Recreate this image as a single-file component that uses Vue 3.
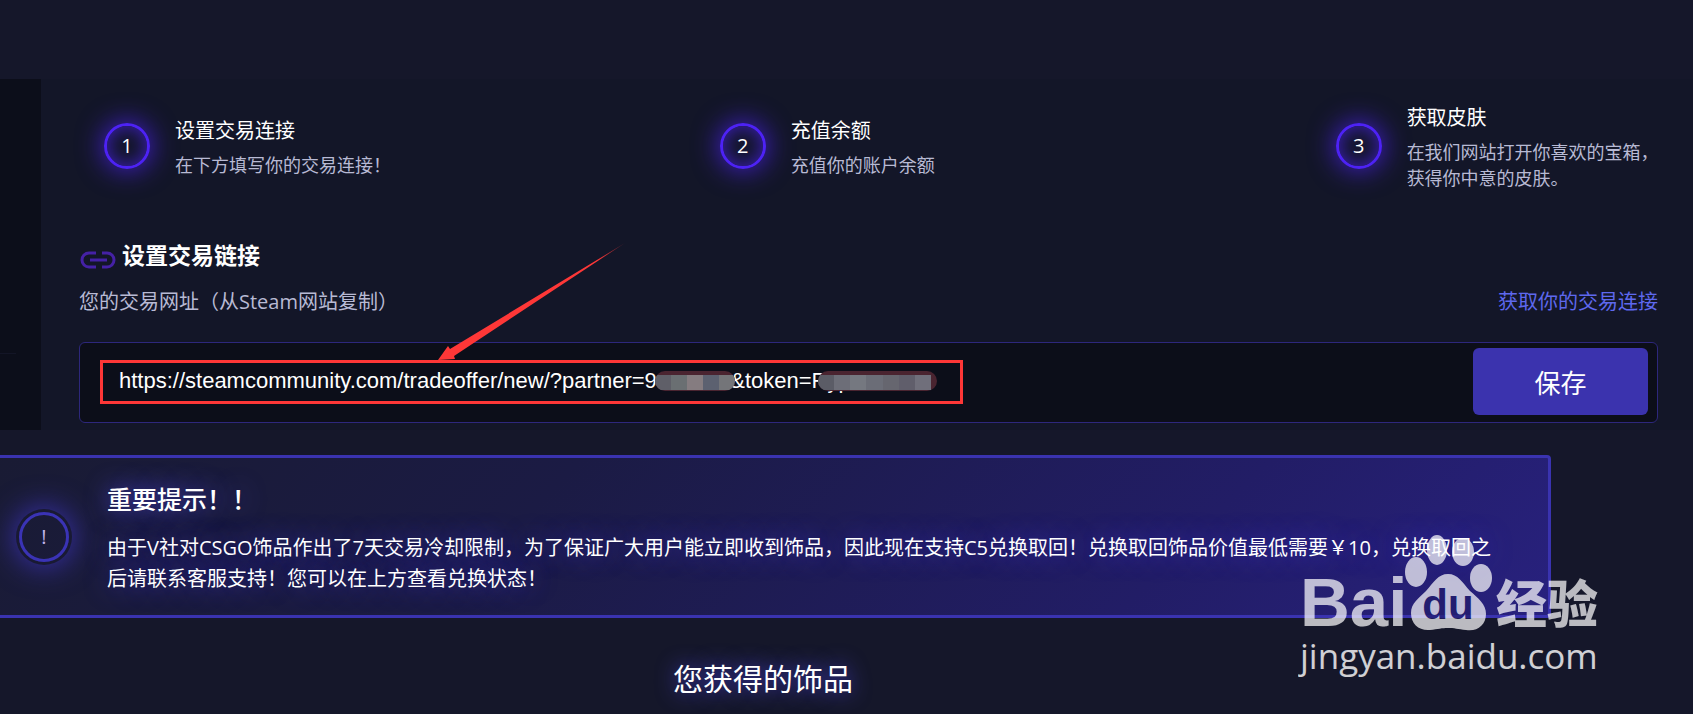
<template>
    <div class="page">
        <div class="panel">
            <aside class="sidebar">
                <div class="sidebar-divider"></div>
            </aside>

            <main class="content">
                <ol class="steps">
                    <li v-for="(step, index) in steps" :key="step.title" class="step">
                        <span class="step-number">{{ index + 1 }}</span>
                        <div class="step-body">
                            <h3>{{ step.title }}</h3>
                            <p>{{ step.text }}</p>
                        </div>
                    </li>
                </ol>

                <h2 class="section-title">
                    <svg class="link-icon" viewBox="0 0 36 18" fill="none" stroke="currentColor" stroke-width="3">
                        <path d="M16 2H9a7 7 0 0 0 0 14h7M22 2h5a7 7 0 0 1 0 14h-5" />
                        <path d="M10 9h17" />
                    </svg>
                    设置交易链接
                </h2>

                <div class="label-row">
                    <label for="trade-url">您的交易网址（从Steam网站复制）</label>
                    <a href="#">获取你的交易连接</a>
                </div>

                <form class="url-form" @submit.prevent="save">
                    <input id="trade-url" v-model="tradeUrl" type="text" spellcheck="false" />
                    <button type="submit">保存</button>

                    <!-- Annotations over the field -->
                    <div class="highlight"></div>
                    <div class="mosaic partner">
                        <i v-for="(color, index) in partnerBlocks" :key="index" :style="{ background: color }"></i>
                    </div>
                    <div class="mosaic token">
                        <i v-for="(color, index) in tokenBlocks" :key="index" :style="{ background: color }"></i>
                    </div>
                    <svg class="arrow" viewBox="0 0 188 118">
                        <defs>
                            <linearGradient id="arrow-fill" x1="0" y1="1" x2="1" y2="0">
                                <stop offset="0.85" stop-color="#fe3737" />
                                <stop offset="1" stop-color="#fe3737" stop-opacity="0.3" />
                            </linearGradient>
                        </defs>
                        <path d="M0 117L10 103L12 106L187 0L16 113L17 116Z" fill="url(#arrow-fill)" />
                    </svg>
                </form>
            </main>
        </div>

        <section class="lower">
            <div class="notice">
                <span class="notice-icon">!</span>
                <div class="notice-body">
                    <h3>重要提示！！</h3>
                    <p>{{ notice }}</p>
                </div>
            </div>
            <h2 class="items-title">您获得的饰品</h2>
        </section>

        <div class="watermark">
            <div class="brand">
                <span class="brand-latin">Bai</span>
                <svg class="paw" viewBox="0 0 88 96">
                    <ellipse cx="12" cy="37" rx="11" ry="15" />
                    <ellipse cx="33" cy="15" rx="10" ry="15" />
                    <ellipse cx="59" cy="17" rx="11" ry="14" />
                    <ellipse cx="77" cy="43" rx="11" ry="14" />
                    <path
                        d="M44 39C54 39 58 47 66 56C74 63 82 69 82 79C82 90 73 97 62 95C54 94 50 93 44 93C38 93 34 94 26 95C15 96 7 89 7 78C7 68 15 63 22 56C30 47 34 39 44 39Z" />
                    <text x="44" y="84" text-anchor="middle">du</text>
                </svg>
                <span class="brand-cjk">经验</span>
            </div>
            <div class="domain">jingyan.baidu.com</div>
        </div>
    </div>
</template>

<script setup>
import { ref } from "vue";

const steps = [
    { title: "设置交易连接", text: "在下方填写你的交易连接！" },
    { title: "充值余额", text: "充值你的账户余额" },
    { title: "获取皮肤", text: "在我们网站打开你喜欢的宝箱，\n获得你中意的皮肤。" },
];

const notice =
    "由于V社对CSGO饰品作出了7天交易冷却限制，为了保证广大用户能立即收到饰品，因此现在支持C5兑换取回！兑换取回饰品价值最低需要￥10，兑换取回之后请联系客服支持！您可以在上方查看兑换状态！";

const tradeUrl = ref("https://steamcommunity.com/tradeoffer/new/?partner=9999999&token=Ryp");

const partnerBlocks = ["#5f5f68", "#6a6f72", "#857c80", "#5c6170", "#747579"];
const tokenBlocks = ["#5b5c66", "#6d6e78", "#757880", "#6b6d77", "#66666f", "#605e6b", "#706f7b"];

const save = () => {
    tradeUrl.value = tradeUrl.value.trim();
};
</script>

<style>
body {
    background: #15172a;
}
</style>

<style scoped>
.page {
    position: relative;
    box-sizing: border-box;
    min-height: 100vh;
    padding-top: 79px;
    overflow: hidden;
    background: #15172a;
    color: #fff;
    font-family: "Open Sans", "Noto Sans CJK SC", sans-serif;
}

h2,
h3,
p,
ol {
    margin: 0;
    padding: 0;
    font-weight: 400;
}

/* --- Panel --- */
.panel {
    display: flex;
    background: #131628;
}

.sidebar {
    flex: 0 0 41px;
    background: #0c0e1a;
}

.sidebar-divider {
    width: 16px;
    height: 274px;
    border-bottom: 1px solid #131526;
}

.content {
    flex: 1;
    min-width: 0;
    padding: 22px 35px 7px 38px;
}

/* --- Steps --- */
.steps {
    display: flex;
    justify-content: space-between;
    list-style: none;
}

.step {
    box-sizing: border-box;
    display: flex;
    align-items: center;
    gap: 25px;
    width: 22%;
    padding-left: 25px;
}

.step-number {
    box-sizing: border-box;
    flex: 0 0 46px;
    height: 46px;
    border: 3px solid #4d22f5;
    border-radius: 50%;
    box-shadow: 0 0 26px 2px rgba(77, 34, 245, 0.75), inset 0 0 18px rgba(77, 34, 245, 0.7);
    font-size: 20px;
    line-height: 40px;
    text-align: center;
}

.step-body {
    white-space: pre;
}

.step-body h3 {
    margin-bottom: 4px;
    font-size: 20px;
    line-height: 34px;
}

.step-body p {
    color: #b8bad4;
    font-size: 18px;
    line-height: 26px;
}

/* --- Trade link form --- */
.section-title {
    display: flex;
    align-items: center;
    gap: 6px;
    margin-top: 48px;
    font-size: 23px;
    font-weight: 700;
    line-height: 32px;
}

.link-icon {
    width: 36px;
    height: 18px;
    margin: 10px 0 0 1px;
    color: #4521a6;
}

.label-row {
    display: flex;
    justify-content: space-between;
    margin: 17px 0 26px;
    color: #b8bad4;
    font-size: 20px;
    line-height: 28px;
}

.label-row a {
    color: #5e68ee;
    text-decoration: none;
}

.url-form {
    position: relative;
    display: flex;
    padding: 5px 9px 7px 0;
    border: 1px solid #2d277c;
    border-radius: 6px;
    background: #0c0e19;
}

.url-form input {
    flex: 1;
    min-width: 0;
    padding: 0 39px 1px;
    border: none;
    outline: none;
    background: transparent;
    color: #fff;
    font-family: "Liberation Sans", Arial, sans-serif;
    font-size: 22px;
}

.url-form button {
    width: 175px;
    height: 67px;
    border: none;
    border-radius: 6px;
    background: #3b33ae;
    color: #fff;
    cursor: pointer;
    font-family: inherit;
    font-size: 26px;
}

/* --- Annotations --- */
.highlight {
    position: absolute;
    top: 17px;
    left: 20px;
    box-sizing: border-box;
    width: 863px;
    height: 44px;
    border: 3px solid #fe3737;
    pointer-events: none;
}

.mosaic {
    position: absolute;
    top: 28px;
    box-sizing: border-box;
    display: flex;
    height: 20px;
    padding: 4px 0 1px;
    overflow: hidden;
    border-radius: 10px;
    background: #4a2430;
}

.mosaic i {
    flex: 1;
}

.mosaic.partner {
    left: 575px;
    width: 80px;
}

.mosaic.token {
    left: 738px;
    width: 119px;
    padding-right: 6px;
}

.arrow {
    position: absolute;
    top: -100px;
    left: 358px;
    width: 188px;
    height: 118px;
    pointer-events: none;
}

/* --- Notice --- */
.lower {
    margin: 25px 142px 0 -25px;
}

.notice {
    display: flex;
    align-items: flex-start;
    gap: 38px;
    padding: 25px 48px 21px 41px;
    border: 3px solid #3a33b0;
    border-radius: 4px;
    background: linear-gradient(135deg, #191b33 0%, #1b1b44 35%, #221d66 75%, #28217e 100%);
}

.notice-icon {
    box-sizing: border-box;
    flex: 0 0 50px;
    height: 50px;
    margin-top: 29px;
    border: 3px solid #3a33b5;
    border-radius: 50%;
    box-shadow: 0 0 0 3px #191a33, 0 0 30px 4px #3a31b0;
    color: #c3b6ee;
    font-size: 20px;
    line-height: 44px;
    text-align: center;
}

.notice-body h3 {
    margin-bottom: 17px;
    font-size: 25px;
    font-weight: 500;
    line-height: 32px;
    text-shadow: 0 0 24px #4a40d8;
}

.notice-body p {
    font-size: 20px;
    line-height: 31px;
    text-shadow: 0 0 24px #3a2fc0;
}

.items-title {
    margin-top: 41px;
    font-size: 30px;
    line-height: 40px;
    text-align: center;
    text-shadow: 0 0 20px #4a40d8;
}

/* --- Watermark --- */
.watermark {
    position: absolute;
    right: 91px;
    bottom: 38px;
    width: 302px;
    color: #fff;
    pointer-events: none;
}

.brand {
    display: flex;
    align-items: flex-end;
    opacity: 0.71;
}

.brand-latin {
    width: 104px;
    font-family: "Liberation Sans", Arial, sans-serif;
    font-size: 69px;
    font-weight: 700;
    line-height: 70px;
}

.paw {
    width: 88px;
    height: 96px;
    margin-bottom: 7px;
    fill: #fff;
}

.paw text {
    fill: #221d6e;
    font-family: "Liberation Sans", Arial, sans-serif;
    font-size: 42px;
    font-weight: 700;
}

.brand-cjk {
    margin-left: 4px;
    font-family: "Noto Sans CJK SC", sans-serif;
    font-size: 51px;
    font-weight: 900;
    line-height: 74px;
}

.domain {
    margin-bottom: 2px;
    font-size: 35px;
    font-weight: 500;
    line-height: 36px;
    opacity: 0.8;
}
</style>
